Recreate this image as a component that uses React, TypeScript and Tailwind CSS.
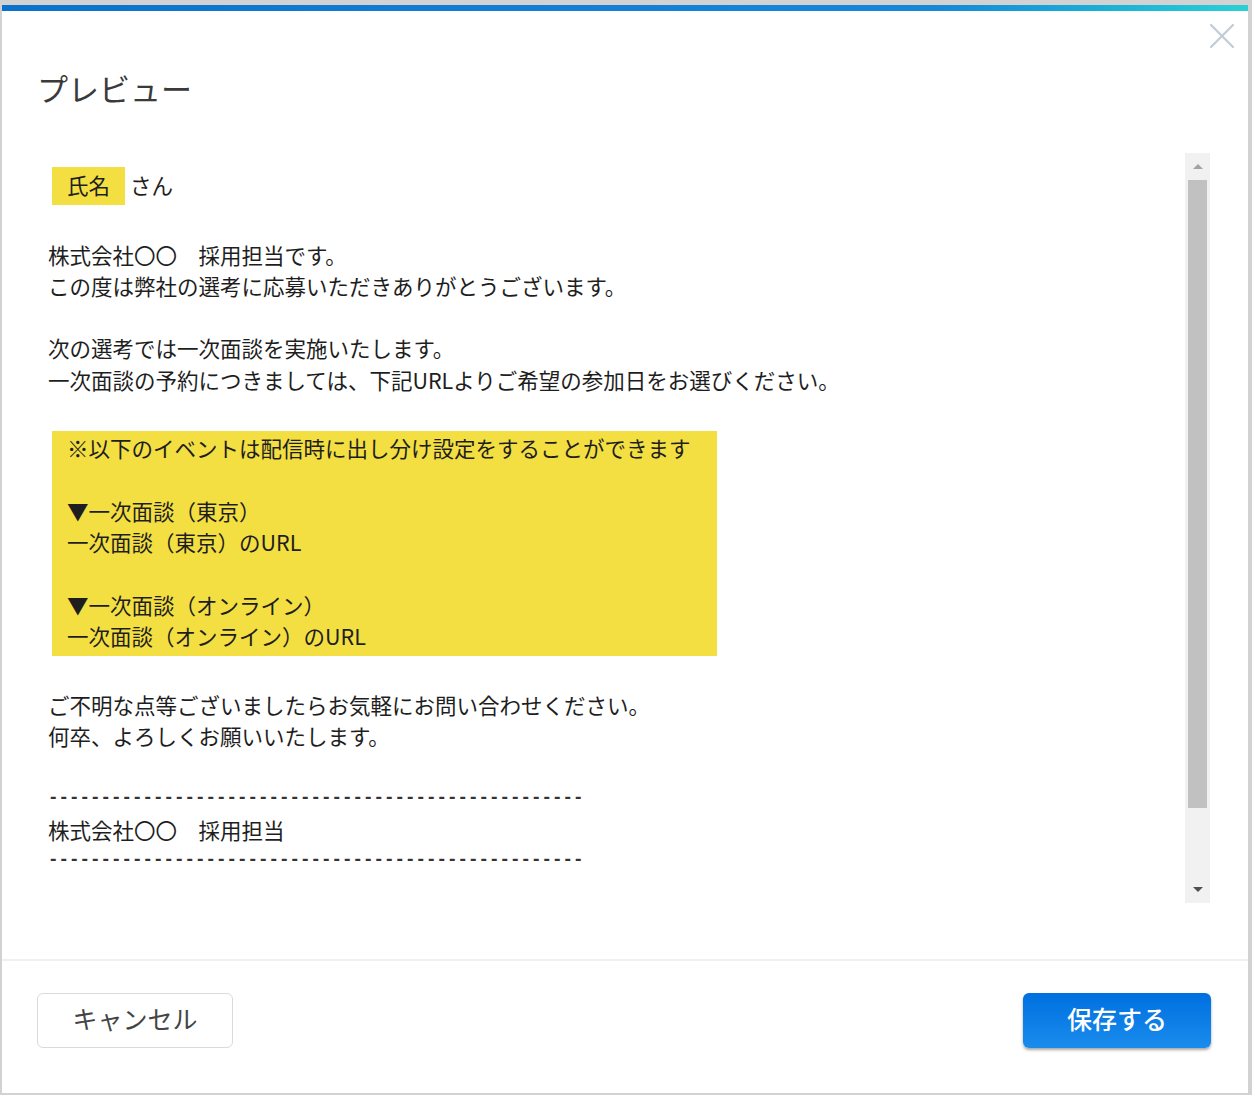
import { X } from "lucide-react";

const jp = "font-['Noto_Sans_CJK_JP','Noto_Sans',sans-serif]";

const Blank = () => <div className="h-[31.3px]" />;

const Dashes = () => (
  <div className="h-[31.3px] flex items-center font-['Liberation_Mono',monospace] text-[17.5px] text-[#333] font-bold">
    {"-".repeat(51)}
  </div>
);

const Scrollbar = () => (
  <div className="w-[25px] h-full bg-[#f1f1f1] flex flex-col items-center">
    <div className="h-[27px] w-full flex items-center justify-center">
      <div className="w-0 h-0 border-l-[5px] border-r-[5px] border-b-[5px] border-l-transparent border-r-transparent border-b-[#a3a3a3]" />
    </div>
    <div className="w-[19px] h-[628px] bg-[#c1c1c1]" />
    <div className="flex-1 w-full flex items-end justify-center pb-[11px]">
      <div className="w-0 h-0 border-l-[5px] border-r-[5px] border-t-[5px] border-l-transparent border-r-transparent border-t-[#505050]" />
    </div>
  </div>
);

export default function App() {
  return (
    <div className={`w-[1252px] h-[1095px] bg-[#d2d2d2] pt-[5px] pl-[2px] pr-[4px] pb-[2px] ${jp}`}>
      <div className="relative h-full bg-white flex flex-col">
        <div className="h-[6px] bg-linear-to-r from-[#0a72cc] via-[#1688d8] via-75% to-[#2ad0d4]" />
        <button className="absolute top-[9px] right-[4px] text-[#c3cdd8]">
          <X size={44} strokeWidth={1.3} />
        </button>

        <div className="pt-[57px] pb-[45px] pl-[35px]">
          <h1 className="text-[31px] leading-[40px] text-[#3a3a3a] font-normal">プレビュー</h1>
        </div>

        <div className="h-[750px] flex">
          <div className="flex-1 pl-[46px] text-[21.5px] leading-[31.3px] text-[#1e1e1e]">
            <div className="mt-[14px] flex items-center h-[38px]">
              <span className="ml-[4px] h-full px-[15px] pb-[2px] bg-[#f3df42] flex items-center">氏名</span>
              <span className="ml-[5px] pb-[2px]">さん</span>
            </div>
            <div className="mt-[33.5px]">
              <div>株式会社〇〇　採用担当です。</div>
              <div>この度は弊社の選考に応募いただきありがとうございます。</div>
              <Blank />
              <div>次の選考では一次面談を実施いたします。</div>
              <div>一次面談の予約につきましては、下記URLよりご希望の参加日をお選びください。</div>
              <Blank />
              <div className="ml-[4px] mt-[5px] mb-[1px] w-[665px] bg-[#f3df42] px-[15px] pt-[1px] pb-[5px]">
                <div>※以下のイベントは配信時に出し分け設定をすることができます</div>
                <Blank />
                <div>▼一次面談（東京）</div>
                <div>一次面談（東京）のURL</div>
                <Blank />
                <div>▼一次面談（オンライン）</div>
                <div>一次面談（オンライン）のURL</div>
              </div>
              <Blank />
              <div>ご不明な点等ございましたらお気軽にお問い合わせください。</div>
              <div>何卒、よろしくお願いいたします。</div>
              <Blank />
              <Dashes />
              <div>株式会社〇〇　採用担当</div>
              <Dashes />
            </div>
          </div>
          <div className="mr-[38px]">
            <Scrollbar />
          </div>
        </div>

        <div className="mt-[56px] border-t-2 border-[#f0f0f0] pt-[32px] px-[35px] pr-[37px] flex justify-between">
          <button className="w-[196px] h-[55px] pb-[4px] rounded-[6px] border border-[#dadada] bg-white text-[25px] text-[#444]">
            キャンセル
          </button>
          <button className="w-[188px] h-[55px] pb-[4px] rounded-[6px] bg-linear-to-b from-[#006fe0] to-[#1a8cec] text-white text-[25px] font-medium shadow-[0_2px_3px_rgba(0,0,0,0.35)]">
            保存する
          </button>
        </div>
      </div>
    </div>
  );
}
